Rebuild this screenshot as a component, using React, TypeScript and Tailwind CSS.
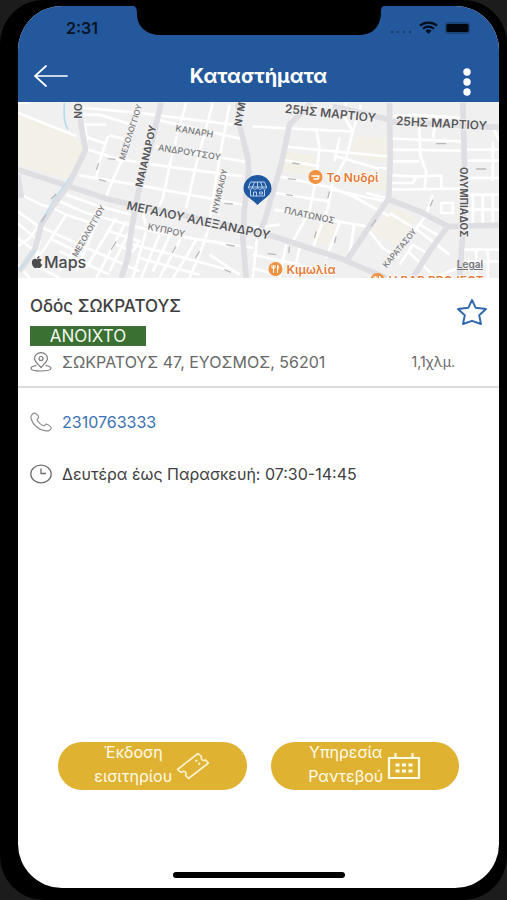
import { FaApple } from 'react-icons/fa';

const minorRoads = [
  'M54 44 L230 114 M54 14 L90 14 M240 28 L420 45 L700 80 M250 80 L320 80 M256 85 L262 130 M240 50 L300 50 L390 78',
  'M262 118 L322 138 M330 112 L395 128 M326 114 L300 190 L290 240 M258 152 L345 180 L372 192 M240 232 L420 262 L740 322',
  'M365 190 L330 270 L318 300 M365 185 L520 208 L730 235 M470 65 L560 85 L735 125 M470 145 L740 192',
  'M560 14 L520 160 L490 300 L470 345 M640 14 L590 200 L560 330 M690 20 L660 180 L625 400 L600 470 L570 540',
  'M200 290 L300 325 L400 352 M180 310 L260 345 L460 400 L600 425 L762 450 M430 345 L440 385 M54 285 L130 322 L170 330',
  'M150 325 L200 350 L130 460 L110 480 M54 340 L110 380 L240 440 L420 520 M54 375 L120 430 L105 500 L180 540',
  'M120 380 L90 420 L54 445 M200 350 L290 380 L230 520 M300 325 L215 470 L180 520 M350 360 L260 510 M380 370 L290 540',
  'M400 380 L330 520 M330 400 L420 430 L400 460 L350 440 M180 460 L330 530 M150 420 L250 470 M440 400 L400 540 M480 410 L425 540',
  'M510 415 L460 520 M545 420 L480 540 M590 425 L540 510 L520 540 M400 440 L520 470 L700 520 M420 480 L600 530 M630 470 L720 530',
  'M640 430 L690 445 M54 500 L90 540 M54 420 L120 470',
  // east of the pin
  'M759 85 L870 92 L1060 100 M850 145 L950 155 L1165 175 M845 185 L960 205 M840 235 L1000 270 L1070 300 L1170 355 M830 285 L985 310 M825 335 L960 360',
  'M950 90 L960 150 L950 240 L930 340 L880 430 M1040 14 L1030 50 L1060 100 L1040 180 L1000 250 L985 330 L940 450 M1010 175 L1130 210 L1165 212',
  'M1020 120 L1005 190 M1085 20 L1060 100 M960 360 L1100 385 M1020 375 L980 480 M1065 375 L1050 470 M1000 275 L1110 300 L1165 310 M1100 285 L1160 300',
  'M1180 55 L1240 50 L1390 60 M1175 122 L1390 130 M1175 155 L1390 158 M1175 190 L1260 190 M1175 232 L1250 236 L1330 232 M1175 275 L1390 272 M1175 255 L1240 255 L1250 240',
  'M1258 60 L1262 170 L1280 220 L1275 275 M1325 230 L1325 275 M1310 60 L1300 120 M1400 155 L1500 155 M1400 188 L1500 188 M1400 85 L1480 90 L1500 130 M1480 130 L1480 250',
  'M1400 240 L1500 240 M1400 290 L1500 290 M1420 290 L1420 380 M1450 290 L1450 380 M1480 290 L1480 380 M1400 335 L1500 335 M1325 315 L1360 315 L1360 345 L1325 345 Z M1300 290 L1280 350 L1230 420',
  'M1170 345 L1260 400 L1350 470 M1110 400 L1150 450 L1200 480 M1260 380 L1330 420 M1225 460 L1300 530 M1200 500 L1240 440 L1290 470 M1390 455 L1500 455 M1400 490 L1500 490 M1430 455 L1430 540 M1465 455 L1465 540',
  'M1300 540 L1400 500 M759 390 L840 380 M759 470 L900 500 L1000 530 M775 400 L760 540 M860 440 L840 540 M900 450 L880 540 M759 510 L830 530',
];

const majorRoads = [
  'M235 14 L245 80 L258 155 L210 255 L160 325 L125 380 L108 450 L60 520',
  'M485 14 L460 120 L415 290 L395 400 L385 480 L365 540',
  'M715 14 L720 80 L745 180 L748 220 L735 330 L730 420 L740 540',
  'M54 215 L200 262 L330 305 L520 345 L800 408 L1020 480 L1160 540',
  'M935 14 L870 80 L845 200 L815 300 L795 370 L770 420',
  'M1170 14 L1172 180 L1168 300 L1100 400 L1040 490',
  'M1170 305 L1260 340 L1345 385 L1500 382 M1345 385 L1290 460 L1240 540',
  'M1390 14 L1395 200 L1390 400 L1380 540',
  'M54 230 L66 300 M1000 25 L1170 65 M1170 70 L1500 88',
];

const parks = [
  'M54 48 L225 112 L252 155 L205 245 L54 200 Z',
  'M860 160 L950 175 L940 235 L850 220 Z',
  'M1070 115 L1160 120 L1160 195 L1050 170 Z',
  'M1050 215 L1160 225 L1160 280 L1060 262 Z',
  'M1180 330 L1250 360 L1190 440 L1110 400 Z',
  'M960 370 L1010 380 L990 440 L930 430 Z',
];

const avenue = 'text-[12px] font-semibold';
const avenueSteep = 'text-[10px] font-bold';
const street = 'fill-[#77777a] text-[9px] font-medium';
const streetSteep = 'fill-[#77777a] text-[8px] font-medium';

const streets = [
  { name: 'ΝΟ', x: 60, y: 9, angle: -90, style: avenueSteep },
  { name: 'ΜΕΣΟΛΟΓΓΙΟΥ', x: 113, y: 30, angle: -72, style: streetSteep },
  { name: 'ΜΑΙΑΝΔΡΟΥ', x: 128, y: 54, angle: -77, style: avenueSteep },
  { name: 'ΚΑΝΑΡΗ', x: 177, y: 29, angle: 10, style: street },
  { name: 'ΑΝΔΡΟΥΤΣΟΥ', x: 172, y: 50, angle: 9, style: street },
  { name: 'ΝΥΜΦΑΙΟΥ', x: 202, y: 89, angle: -77, style: streetSteep },
  { name: 'ΝΥΜ', x: 222, y: 12, angle: -80, style: avenueSteep },
  { name: 'ΜΕΓΑΛΟΥ ΑΛΕΞΑΝΔΡΟΥ', x: 181, y: 118, angle: 12, style: avenue },
  { name: 'ΚΥΠΡΟΥ', x: 149, y: 128, angle: 12, style: street },
  { name: 'ΜΕΣΟΛΟΓΓΙΟΥ', x: 71, y: 129, angle: -60, style: streetSteep },
  { name: '25ΗΣ ΜΑΡΤΙΟΥ', x: 313, y: 11, angle: 6, style: avenue },
  { name: '25ΗΣ ΜΑΡΤΙΟΥ', x: 424, y: 21, angle: 3, style: avenue },
  { name: 'ΟΛΥΜΠΙΑΔΟΣ', x: 446, y: 100, angle: 90, style: avenueSteep },
  { name: 'ΠΛΑΤΩΝΟΣ', x: 292, y: 113, angle: 12, style: street },
  { name: 'ΚΑΡΑΤΑΣΟΥ', x: 382, y: 146, angle: -50, style: streetSteep },
];

const places = [
  { name: 'Το Νυδρί', x: 298, y: 75 },
  { name: 'Κιμωλία', x: 258, y: 167 },
  { name: 'H BAR PROJECT', x: 360, y: 178 },
];

function Notch() {
  return (
    <svg className="absolute top-0 left-1/2 -translate-x-1/2" width="252" height="29" viewBox="0 0 252 29" aria-hidden="true">
      <path d="M0 0 H252 C249 0 248 2 248 6 C248 20 240 29 226 29 H27 C13 29 4 20 4 8 C4 3 3 0 0 0 Z" fill="#000" />
    </svg>
  );
}

function StatusBar() {
  return (
    <div className="relative flex h-11 items-center justify-between pr-7 pl-12">
      <Notch />
      <span className="text-base font-semibold text-[#071426]">2:31</span>
      <svg width="82" height="14" viewBox="0 0 82 14" aria-hidden="true">
        <g fill="#174070">
          <circle cx="3" cy="11" r="1.3" />
          <circle cx="9" cy="11" r="1.3" />
          <circle cx="15" cy="11" r="1.3" />
          <circle cx="21" cy="11" r="1.3" />
        </g>
        <g fill="none" stroke="#040d1a" strokeWidth="2.2">
          <path d="M31 4.6 C35.5 0.5 43.5 0.5 48 4.6" />
          <path d="M34 7.8 C37 5 42 5 45 7.8" />
        </g>
        <path d="M36.5 9.8 C38.3 8.2 40.7 8.2 42.5 9.8 L39.5 13 Z" fill="#040d1a" />
        <rect x="56" y="1" width="25" height="12" rx="3" fill="#1b4478" />
        <rect x="57.5" y="3" width="22" height="8" rx="1.5" fill="#02060c" />
      </svg>
    </div>
  );
}

function Header() {
  return (
    <header className="bg-[#24589c]">
      <StatusBar />
      <div className="flex h-13 items-center justify-between px-4 text-white">
        <button aria-label="Πίσω">
          <svg width="34" height="22" viewBox="0 0 34 22" fill="none" stroke="currentColor" strokeWidth="1.7" strokeLinecap="round">
            <path d="M1 11 H33 M12 1 L1 11 L12 21" />
          </svg>
        </button>
        <h1 className="text-xl font-bold">Καταστήματα</h1>
        <button aria-label="Μενού" className="pt-3">
          <svg width="34" height="28" viewBox="0 0 34 28" fill="currentColor">
            <circle cx="18" cy="4" r="3.7" />
            <circle cx="18" cy="14" r="3.7" />
            <circle cx="18" cy="24" r="3.7" />
          </svg>
        </button>
      </div>
    </header>
  );
}

function StoreMap() {
  return (
    <section className="relative h-44 overflow-hidden bg-[#f0f0f0]">
      <svg className="h-full w-full" viewBox="0 0 482 176" preserveAspectRatio="xMidYMid slice">
        <g transform="scale(0.33333) translate(-54 -12)" fill="none" strokeLinejoin="round">
          {parks.map((d) => (
            <path key={d} d={d} fill="#f3f0e8" />
          ))}
          {minorRoads.map((d) => (
            <path key={d} d={d} stroke="#fff" strokeWidth="8" />
          ))}
          {majorRoads.map((d) => (
            <path key={d} d={d} stroke="#dedee3" strokeWidth="17" />
          ))}
          <path d="M195 14 C192 50 195 80 206 94" stroke="#b4dcf0" strokeWidth="5" />
          <path d="M212 238 L160 310 L125 375 M108 455 L60 515" stroke="#c5dfec" strokeWidth="5" />
          <path
            d="M298 195 L291 215 M298 244 L320 250 M170 288 L155 303 M140 350 L125 372 M325 182 L348 184 M350 430 L335 455 M675 316 L700 318 M680 440 L705 444 M530 445 L518 465 M600 460 L588 480 M675 515 L695 523 M878 195 L900 198 M865 242 L890 245 M860 290 L880 293 M990 280 L985 300 M950 400 L945 420 M1010 415 L1005 435 M870 445 L868 465 M805 467 L830 470 M1310 137 L1340 137 M1430 213 L1460 213 M1300 305 L1292 325 M1130 365 L1115 385"
            stroke="#b9b9bd"
            strokeWidth="4"
          />
        </g>
        <g fill="#58585b" stroke="#f4f4f4" strokeWidth="1.5" paintOrder="stroke" textAnchor="middle" dominantBaseline="central">
          {streets.map((s, i) => (
            <text key={i} transform={`translate(${s.x} ${s.y}) rotate(${s.angle})`} className={s.style}>
              {s.name}
            </text>
          ))}
        </g>
        {places.map((p) => (
          <g key={p.name} transform={`translate(${p.x} ${p.y})`}>
            <circle r="7" fill="#f0923f" />
            {p.name === 'Το Νυδρί' ? (
              <path d="M-4 -1 H1 C4 -1 4 2 1 2 H-2 M2 -1 H4" stroke="#fff" strokeWidth="1.5" fill="none" />
            ) : (
              <path d="M-2 -4 V4 M-3.5 -4 V-1 H-0.5 V-4 M2 4 V-4 C3.5 -3 3.5 0 2 0" stroke="#fff" fill="none" />
            )}
            <text x="11" y="0" dominantBaseline="central" fill="#e67a35" stroke="#fff" strokeWidth="1.5" paintOrder="stroke" className="text-xs font-semibold">
              {p.name}
            </text>
          </g>
        ))}
        <g transform="translate(240 87)">
          <path d="M0 16 C-4 11 -14 7 -14 0 A14 14 0 0 1 14 0 C14 7 4 11 0 16 Z" fill="#1f57a0" />
          <g fill="none" stroke="#b5cfee" strokeWidth="1">
            <path d="M-7 -7 H7 L9 -2 H-9 Z M-9 -2 C-9 1 -5 1 -5 -2 C-5 1 0 1 0 -2 C0 1 5 1 5 -2 C5 1 9 1 9 -2 M-7 1 V7 H7 V1 M-4 7 V3 H-1 V7 M2 3 H5 V5 H2 Z M-3 -7 L-5 -2 M3 -7 L5 -2 M0 -7 V-2" />
          </g>
        </g>
      </svg>
      <div className="absolute bottom-1 left-3 flex items-center text-base font-medium text-[#4b4b4d]">
        <FaApple size={14} />
        Maps
      </div>
      <a href="#legal" className="absolute right-4 bottom-2 text-[10px] leading-3 font-semibold text-[#77777a] underline">
        Legal
      </a>
    </section>
  );
}

function PinIcon() {
  return (
    <svg width="22" height="20" viewBox="0 0 22 20" fill="none" stroke="#7b7b7b" strokeWidth="1.2">
      <path d="M11 15.5 C8 12 4.5 9.5 4.5 6.5 A6.5 5.8 0 0 1 17.5 6.5 C17.5 9.5 14 12 11 15.5 Z" />
      <circle cx="11" cy="6.5" r="2" />
      <path d="M6.5 13.5 C3 14 1 15 1 16.2 C1 18 5 19 11 19 C17 19 21 18 21 16.2 C21 15 19 14 15.5 13.5" />
    </svg>
  );
}

function PhoneIcon() {
  return (
    <svg width="22" height="20" viewBox="0 0 22 20" fill="none" stroke="#8c8c8c" strokeWidth="1.2" strokeLinejoin="round">
      <path d="M4.5 1.2 C2.5 1.5 0.6 3.5 1 6 C2.2 12.5 8.5 18 15.5 18.9 C18.5 19.2 20.8 17.6 21.2 15.8 C21.4 14.8 17.5 12.2 16.5 12.2 C15.3 12.2 14.6 14 13.6 13.8 C11.2 13 7.8 10 7 7.8 C6.8 6.8 8.8 6.2 8.7 5.2 C8.5 4 6 1 4.5 1.2 Z" />
    </svg>
  );
}

function ClockIcon() {
  return (
    <svg width="22" height="20" viewBox="0 0 22 20" fill="none" stroke="#6f6f6f" strokeWidth="1.3">
      <ellipse cx="11" cy="10" rx="10.2" ry="8.8" />
      <path d="M11 4.5 V9.5 H16" />
    </svg>
  );
}

function StoreInfo() {
  return (
    <>
      <section className="border-b-2 border-[#dcdcdc] px-3 pt-4 pb-3">
        <div className="flex justify-between">
          <div>
            <h2 className="text-[17px] leading-6 font-medium text-[#3e3e3e]">Οδός ΣΩΚΡΑΤΟΥΣ</h2>
            <div className="mt-2 w-29 bg-[#3a7031] text-center text-[17px] leading-5 text-[#f2f7f0]">ΑΝΟΙΧΤΟ</div>
          </div>
          <button aria-label="Αγαπημένα" className="self-start pt-1">
            <svg width="30" height="28" viewBox="0 0 30 28" fill="none" stroke="#2f69ab" strokeWidth="1.9" strokeLinejoin="round">
              <path d="M15 2 L18.7 9.8 L29 11 L22.2 17.2 L24 26 L15 22.8 L6 26 L7.8 17.2 L1 11 L11.3 9.8 Z" />
            </svg>
          </button>
        </div>
        <div className="mt-1 flex items-center text-base text-[#686868]">
          <PinIcon />
          <address className="ml-2.5 not-italic">ΣΩΚΡΑΤΟΥΣ 47, ΕΥΟΣΜΟΣ, 56201</address>
          <span className="ml-auto pr-8 text-sm">1,1χλμ.</span>
        </div>
      </section>
      <section className="px-3">
        <div className="mt-6 flex items-center text-base leading-5">
          <PhoneIcon />
          <a href="tel:2310763333" className="ml-2.5 text-[#3a70b2]">2310763333</a>
        </div>
        <div className="mt-8 flex items-center text-base leading-5 text-[#404040]">
          <ClockIcon />
          <span className="ml-2.5">Δευτέρα έως Παρασκευή: 07:30-14:45</span>
        </div>
      </section>
    </>
  );
}

function TicketIcon() {
  return (
    <svg width="34" height="28" viewBox="0 0 34 28" fill="none" stroke="#fff3cf" strokeWidth="1.6" strokeLinejoin="round">
      <path d="M1.5 17.5 L22 1.5 L25.5 4.5 C24.5 7.5 27 9.5 29.5 8 L32.5 11 L12.5 26.5 L9.5 23.5 C11.5 20.5 8 18 5 20.5 Z" />
      <path d="M19.5 8 L21 9.5 M22.5 11 L24 12.5" strokeWidth="2" />
    </svg>
  );
}

function CalendarIcon() {
  return (
    <svg width="34" height="28" viewBox="0 0 34 28" fill="none" stroke="#fffbe9" strokeWidth="2.2">
      <path d="M2 6 H32 V26 H2 Z M8.5 1 V6 M25.5 1 V6" />
      <path d="M8.5 13 H26 M8.5 19 H26" strokeWidth="3" strokeDasharray="4 2.5" />
    </svg>
  );
}

function Actions() {
  return (
    <div className="mt-auto flex justify-center gap-6 px-10">
      <button className="flex h-12 flex-1 items-center justify-center gap-1 rounded-full bg-[#e0b232] text-base leading-6 text-[#fffbea]">
        <span className="pb-1">
          Έκδοση
          <br />
          εισιτηρίου
        </span>
        <TicketIcon />
      </button>
      <button className="flex h-12 flex-1 items-center justify-center gap-1 rounded-full bg-[#e0b232] text-base leading-6 text-[#fffbea]">
        <span className="pb-1">
          Υπηρεσία
          <br />
          Ραντεβού
        </span>
        <CalendarIcon />
      </button>
    </div>
  );
}

export default function App() {
  return (
    <div className="flex min-h-screen flex-col bg-[#1c1c1c] font-['Inter','Noto_Sans',sans-serif]">
      <div className="flex flex-1 flex-col rounded-[44px] bg-black pt-1.5 pr-2 pb-3 pl-4.5">
        <main className="flex flex-1 flex-col overflow-hidden rounded-[44px] bg-white">
          <Header />
          <StoreMap />
          <StoreInfo />
          <Actions />
          <div className="mx-auto mt-[82px] mb-2.5 h-1.5 w-43 rounded-full bg-black" />
        </main>
      </div>
    </div>
  );
}
